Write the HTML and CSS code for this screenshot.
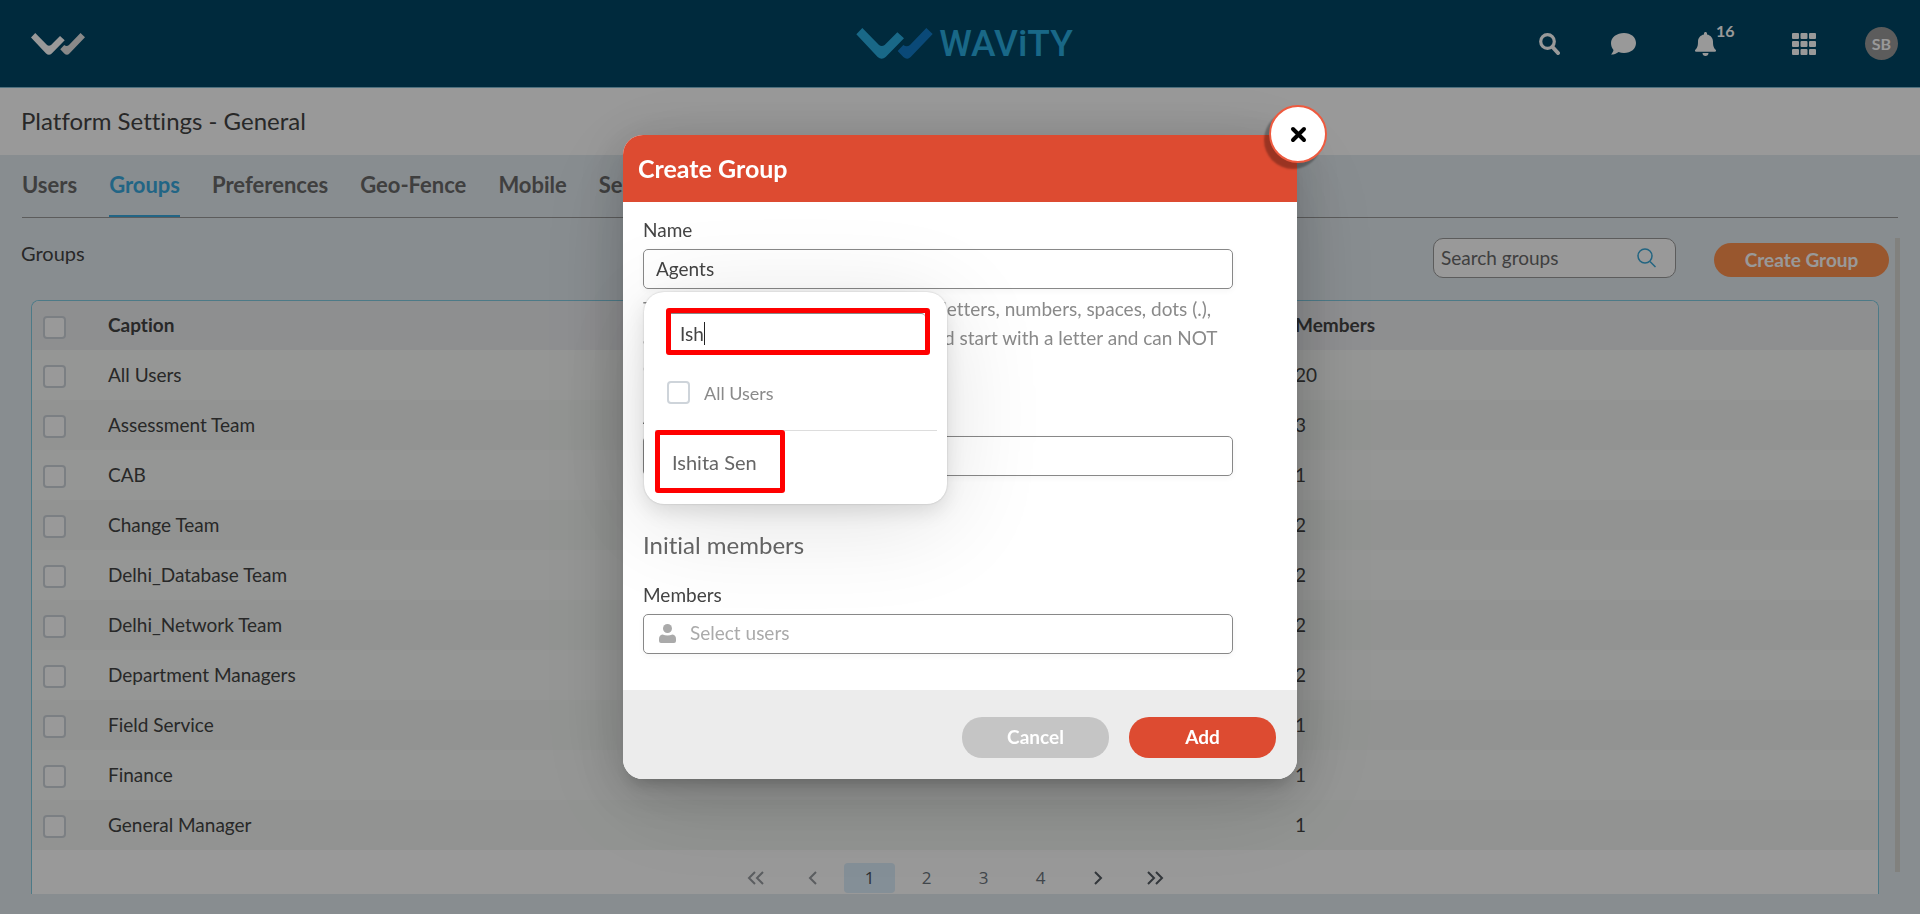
FILE: index.html
```html
<!DOCTYPE html>
<html lang="en">
<head>
    <meta charset="UTF-8">
    <meta name="viewport" content="width=device-width, initial-scale=1.0">
    <title>Platform Settings - General</title>
    <link rel="stylesheet" href="styles.css">
</head>
<body>
    <svg class="defs" aria-hidden="true">
        <symbol id="mark" viewBox="0 0 229 93">
            <path class="mark-left" d="M0 19 18 0 68 51q8 6 17 0L123 13l20 18L88 87q-12 10-24 0Z"/>
            <path class="mark-right" d="M124 69 141 51q10 8 20 0L210 0l19 18L163 87q-10 10-22 0Z"/>
        </symbol>
    </svg>

    <header class="topbar">
        <a href="#" class="home" aria-label="Home"><svg width="54" height="22"><use href="#mark"/></svg></a>
        <div class="brand">
            <svg width="77" height="31"><use href="#mark"/></svg>
            <span>WAViTY</span>
        </div>
        <div class="actions">
            <button type="button" aria-label="Search">
                <svg width="21" height="22" viewBox="0 0 21 22" fill="none" stroke="#fff">
                    <circle cx="8.500" cy="8.500" r="6.800" stroke-width="3.200"/>
                    <path d="M13.500 14 19 20" stroke-width="4" stroke-linecap="round"/>
                </svg>
            </button>
            <button type="button" class="chat" aria-label="Messages">
                <svg width="25" height="22" viewBox="0 0 25 22" fill="#fff">
                    <path d="M13 0C20 0 25 4.300 25 10s-5 10-12 10c-2 0-3.800-.400-5.400-1.100C5.500 20.500 2.800 21.600 0 21.600c1.300-1.400 2.200-2.900 2.500-4.500C1 15.200 0 12.800 0 10 0 4.300 6 0 13 0Z"/>
                </svg>
            </button>
            <button type="button" class="bell" aria-label="Notifications">
                <svg width="21" height="24" viewBox="0 0 21 24" fill="#fff">
                    <path d="M10.500 0c.900 0 1.500.600 1.500 1.500v1c3.600.700 6 3.500 6 7.200 0 4.600 1 6.400 2.700 8 .700.700.200 2-.900 2H1.200c-1.100 0-1.600-1.300-.900-2 1.700-1.600 2.700-3.400 2.700-8C3 6 5.400 3.200 9 2.500v-1C9 .600 9.600 0 10.500 0ZM7.500 21h6c0 1.700-1.300 3-3 3s-3-1.300-3-3Z"/>
                </svg>
                <span class="badge">16</span>
            </button>
            <button type="button" aria-label="Apps">
                <svg width="24" height="22" viewBox="0 0 24 22" fill="#fff">
                    <rect width="7" height="6" rx="1"/><rect x="8.500" width="7" height="6" rx="1"/><rect x="17" width="7" height="6" rx="1"/>
                    <rect y="8" width="7" height="6" rx="1"/><rect x="8.500" y="8" width="7" height="6" rx="1"/><rect x="17" y="8" width="7" height="6" rx="1"/>
                    <rect y="16" width="7" height="6" rx="1"/><rect x="8.500" y="16" width="7" height="6" rx="1"/><rect x="17" y="16" width="7" height="6" rx="1"/>
                </svg>
            </button>
            <button type="button" class="avatar">SB</button>
        </div>
    </header>

    <h1 class="page-title">Platform Settings - General</h1>

    <nav class="tabs">
        <a href="#">Users</a>
        <a href="#" class="active">Groups</a>
        <a href="#">Preferences</a>
        <a href="#">Geo-Fence</a>
        <a href="#">Mobile</a>
        <a href="#">Session</a>
    </nav>

    <main class="content">
        <div class="toolbar">
            <h2>Groups</h2>
            <div class="search">
                <input type="text" placeholder="Search groups" aria-label="Search groups">
                <svg width="19" height="20" viewBox="0 0 19 20" fill="none" stroke="#3aa8d8" stroke-width="1.500">
                    <circle cx="8" cy="8" r="7"/>
                    <path d="M13 13.500 18.500 19"/>
                </svg>
            </div>
            <button type="button" class="create">Create Group</button>
        </div>

        <div class="panel">
            <table>
                <thead>
                    <tr><th class="check"><input type="checkbox" aria-label="Select all"></th><th>Caption</th><th class="count">Members</th></tr>
                </thead>
                <tbody>
                    <tr><td><input type="checkbox" aria-label="All Users"></td><td>All Users</td><td>20</td></tr>
                    <tr><td><input type="checkbox" aria-label="Assessment Team"></td><td>Assessment Team</td><td>3</td></tr>
                    <tr><td><input type="checkbox" aria-label="CAB"></td><td>CAB</td><td>1</td></tr>
                    <tr><td><input type="checkbox" aria-label="Change Team"></td><td>Change Team</td><td>2</td></tr>
                    <tr><td><input type="checkbox" aria-label="Delhi_Database Team"></td><td>Delhi_Database Team</td><td>2</td></tr>
                    <tr><td><input type="checkbox" aria-label="Delhi_Network Team"></td><td>Delhi_Network Team</td><td>2</td></tr>
                    <tr><td><input type="checkbox" aria-label="Department Managers"></td><td>Department Managers</td><td>2</td></tr>
                    <tr><td><input type="checkbox" aria-label="Field Service"></td><td>Field Service</td><td>1</td></tr>
                    <tr><td><input type="checkbox" aria-label="Finance"></td><td>Finance</td><td>1</td></tr>
                    <tr><td><input type="checkbox" aria-label="General Manager"></td><td>General Manager</td><td>1</td></tr>
                </tbody>
            </table>
            <div class="pager">
                <button type="button" class="off" aria-label="First page"><svg width="18" height="14" viewBox="0 0 18 14"><path d="M8 1 2 7l6 6M16 1l-6 6 6 6"/></svg></button>
                <button type="button" class="off" aria-label="Previous page"><svg width="10" height="14" viewBox="0 0 10 14"><path d="M8 1 2 7l6 6"/></svg></button>
                <button type="button" class="current">1</button>
                <button type="button">2</button>
                <button type="button">3</button>
                <button type="button">4</button>
                <button type="button" aria-label="Next page"><svg width="10" height="14" viewBox="0 0 10 14"><path d="m2 1 6 6-6 6"/></svg></button>
                <button type="button" aria-label="Last page"><svg width="18" height="14" viewBox="0 0 18 14"><path d="m2 1 6 6-6 6M10 1l6 6-6 6"/></svg></button>
            </div>
        </div>
        <div class="track"></div>
    </main>

    <div class="overlay">
        <form class="modal" role="dialog" aria-labelledby="modalTitle">
            <button type="button" class="close" aria-label="Close">
                <svg width="17" height="17" viewBox="0 0 17 17" stroke="#000" stroke-width="4" stroke-linecap="round"><path d="m3 3 11 11M14 3 3 14"/></svg>
            </button>
            <h2 class="modal-title" id="modalTitle">Create Group</h2>
            <div class="modal-body">
                <label for="name">Name</label>
                <input type="text" class="field" id="name" value="Agents">
                <p class="hint">This name may contain only English letters, numbers, spaces, dots (.),<br>and hyphens (-), underscore. It should start with a letter and can NOT<br>contain only dots.</p>
                <label for="admins">Administrators</label>
                <input type="text" class="field" id="admins">
                <h3>Initial members</h3>
                <label for="members">Members</label>
                <div class="field members">
                    <svg width="17" height="19" viewBox="0 0 17 19" fill="#aaa">
                        <ellipse cx="8.500" cy="4.500" rx="4.500" ry="4.500"/>
                        <path d="M3.500 10.500q5 2 10 0Q17 11 17 15v2q0 2-2 2H2q-2 0-2-2v-2q0-4 3.500-4.500Z"/>
                    </svg>
                    <input type="text" id="members" placeholder="Select users">
                </div>

                <div class="picker">
                    <div class="picker-search">
                        <input type="text" value="Ish" aria-label="Search users">
                        <span class="caret"></span>
                    </div>
                    <label class="picker-all"><input type="checkbox"> All Users</label>
                    <div class="picker-list">
                        <button type="button">Ishita Sen</button>
                    </div>
                </div>
            </div>
            <div class="modal-footer">
                <button type="button" class="cancel">Cancel</button>
                <button type="submit" class="add">Add</button>
            </div>
        </form>
    </div>
</body>
</html>
```
FILE: styles.css
```css
* {
    box-sizing: border-box;
}
body {
    margin: 0;
    height: 100vh;
    display: flex;
    flex-direction: column;
    overflow: hidden;
    background: #e3ebf0;
    color: #444;
    font-family: Lato, "Liberation Sans", sans-serif;
    font-size: 19px;
    line-height: 24px;
    font-variant-ligatures: none;
}
h1, h2, h3, p {
    margin: 0;
    font-weight: normal;
}
button {
    padding: 0;
    border: none;
    background: none;
    font: inherit;
    cursor: pointer;
}
input {
    font: inherit;
    color: inherit;
}
svg {
    display: block;
}
.defs {
    position: absolute;
    width: 0;
    height: 0;
}
input[type="checkbox"] {
    appearance: none;
    display: block;
    width: 23px;
    height: 23px;
    margin: 0;
    border: 2px solid #ced4da;
    border-radius: 4px;
    background: #fff;
}

/* Top bar */
.topbar {
    display: grid;
    grid-template-columns: 1fr auto 1fr;
    align-items: center;
    height: 88px;
    flex: none;
    padding: 0 22px 0 31px;
    background: #004766;
    border-bottom: 1px solid #84bdd4;
}
.home {
    fill: #fff;
    justify-self: start;
}
.brand {
    display: flex;
    align-items: center;
    gap: 6px;
    color: #2aaee2;
    fill: #2aaee2;
    font-family: Roboto, sans-serif;
    font-size: 37px;
    line-height: 40px;
    font-weight: 500;
}
.brand svg {
    color: #127bc8;
}
.brand svg, .home svg {
    overflow: visible;
}
.mark-right {
    fill: currentColor;
}
.home svg {
    color: #e4e4e4;
}
.actions {
    display: flex;
    align-items: center;
    justify-content: flex-end;
    gap: 49px;
}
.chat {
    margin-left: 2px;
}
.bell {
    position: relative;
    margin: 0 27px 0 10px;
}
.badge {
    position: absolute;
    left: 21px;
    top: -11px;
    color: #fff;
    font-size: 16px;
    font-weight: bold;
    line-height: 20px;
}
.avatar {
    width: 33px;
    height: 33px;
    border-radius: 50%;
    background: #999;
    color: #fff;
    font-size: 16px;
    font-weight: bold;
}

.page-title {
    flex: none;
    padding: 0 21px 2px;
    background: #fff;
    font-size: 24px;
    line-height: 65px;
}

/* Tabs */
.tabs {
    flex: none;
    display: flex;
    gap: 32px;
    margin: 0 22px;
    border-bottom: 1px solid #999;
    font-size: 22px;
    font-weight: bold;
}
.tabs a {
    height: 62px;
    line-height: 60px;
    color: #6a6a6a;
    text-decoration: none;
}
.tabs .active {
    color: #39a9de;
    border-bottom: 2px solid #39a9de;
}

/* Groups list */
.content {
    position: relative;
    flex: 1;
    min-height: 0;
    display: flex;
    flex-direction: column;
    padding-bottom: 20px;
}
.toolbar {
    flex: none;
    display: flex;
    align-items: center;
    padding: 20px 31px 22px 21px;
}
.toolbar h2 {
    flex: 1;
    align-self: flex-start;
    font-size: 20px;
    line-height: 30px;
}
.search {
    display: flex;
    align-items: center;
    width: 243px;
    height: 40px;
    padding: 0 19px 0 7px;
    border: 1px solid #999;
    border-radius: 10px;
    background: #fff;
}
.search input {
    flex: 1;
    min-width: 0;
    padding: 0;
    border: none;
    background: none;
}
.search input::placeholder {
    color: #6a6a6a;
}
.create {
    width: 175px;
    height: 34px;
    margin: 4px 0 0 38px;
    border-radius: 17px;
    background: #ff914e;
    color: #fff;
    font-weight: bold;
}
.panel {
    flex: 1;
    min-height: 0;
    overflow: hidden;
    margin: 0 41px 0 31px;
    border: 1px solid #80cbe2;
    border-bottom: none;
    border-radius: 8px 8px 0 0;
    background: #fff;
}
table {
    width: 100%;
    table-layout: fixed;
    border-collapse: collapse;
}
th, td {
    height: 50px;
    padding: 0 0 1px;
    text-align: left;
}
th {
    height: 49px;
}
th:first-child, td:first-child {
    padding: 3px 0 0 11px;
}
.check {
    width: 76px;
}
.count {
    width: 583px;
}
thead tr {
    background: #edeef1;
}
tbody tr {
    background: #f8faf8;
}
tbody tr:nth-child(even) {
    background: #f3f6f3;
}
.pager {
    display: flex;
    justify-content: center;
    gap: 6px;
    padding-top: 13px;
}
.pager button {
    display: flex;
    align-items: center;
    justify-content: center;
    width: 51px;
    height: 30px;
    border-radius: 4px;
    color: #6c757d;
    font-family: "Open Sans", sans-serif;
    font-size: 17px;
}
.pager .current {
    background: #dceefc;
    color: #495057;
}
.pager svg {
    fill: none;
    stroke: #555c63;
    stroke-width: 2;
}
.pager .off {
    opacity: 0.6;
}
.track {
    position: absolute;
    top: 20px;
    right: 20px;
    bottom: 42px;
    width: 5px;
    background: #d8d8d2;
}

/* Create Group dialog */
.overlay {
    position: fixed;
    inset: 0;
    display: flex;
    align-items: center;
    justify-content: center;
    background: rgba(0, 0, 0, 0.4);
}
.modal {
    position: relative;
    width: 674px;
    border-radius: 20px;
    background: #fff;
    box-shadow: 0 11px 15px -7px rgba(0, 0, 0, 0.2), 0 9px 46px 8px rgba(0, 0, 0, 0.12), 0 24px 100px rgba(0, 0, 0, 0.12);
}
.close {
    position: absolute;
    top: -30px;
    right: -30px;
    display: flex;
    align-items: center;
    justify-content: center;
    width: 58px;
    height: 58px;
    border: 2px solid #ee5a3f;
    border-radius: 50%;
    background: #fff;
    box-shadow: -5px 6px 2px rgba(0, 0, 0, 0.3);
}
.modal-title {
    padding: 0 15px;
    border-radius: 20px 0 0 0;
    background: #dd4b31;
    color: #fff;
    font-size: 25px;
    font-weight: bold;
    line-height: 67px;
}
.modal-body {
    position: relative;
    padding: 16px 64px 36px 20px;
}
.modal-body > label {
    display: block;
}
.field {
    display: block;
    width: 100%;
    height: 40px;
    margin-top: 7px;
    padding: 0 12px 2px;
    border: 1px solid #888;
    border-radius: 5px;
    background: none;
    box-shadow: 0 2px 6px rgba(0, 0, 0, 0.04);
}
.hint {
    margin: 5px 0 24px;
    color: #8a8a8a;
    line-height: 29px;
    white-space: nowrap;
}
.modal-body h3 {
    margin: 54px 0 23px;
    color: #666;
    font-size: 24px;
    line-height: 30px;
}
.members {
    display: flex;
    align-items: center;
    gap: 14px;
    padding: 0 15px 2px;
}
.members input {
    flex: 1;
    padding: 0;
    border: none;
    background: none;
}
.members input::placeholder {
    color: #aaa;
}
.picker {
    position: absolute;
    top: 90px;
    left: 21px;
    width: 303px;
    padding: 16px 10px 11px 11px;
    border-radius: 20px;
    background: #fff;
    box-shadow: 0 0 2px rgba(0, 0, 0, 0.2), 0 8px 20px rgba(0, 0, 0, 0.1), 0 16px 100px rgba(0, 0, 0, 0.12);
}
.picker-search {
    position: relative;
    margin: 0 7px 0 11px;
    border: 5px solid #f00;
    border-radius: 3px;
}
.picker-search input {
    display: block;
    width: 100%;
    height: 37px;
    padding: 2px 9px 0;
    border: none;
    border-top: 1px solid #888;
    border-radius: 0 4px 0 0;
}
.caret {
    position: absolute;
    top: 9px;
    left: 33px;
    width: 1px;
    height: 23px;
    background: #222;
}
.picker-all {
    display: flex;
    align-items: center;
    gap: 14px;
    height: 23px;
    margin: 26px 12px;
    color: #8a8a8a;
    font-size: 18px;
}
.picker-list {
    border-top: 1px solid #ddd;
}
.picker-list button {
    display: block;
    height: 63px;
    width: 130px;
    margin-top: -1px;
    padding-left: 12px;
    border: 5px solid #f00;
    border-radius: 3px;
    color: #666;
    font-size: 20px;
    text-align: left;
}
.modal-footer {
    display: flex;
    justify-content: flex-end;
    gap: 20px;
    padding: 27px 21px 21px;
    border-radius: 0 0 20px 20px;
    background: #ececec;
}
.modal-footer button {
    width: 147px;
    height: 41px;
    padding-bottom: 2px;
    border-radius: 20px;
    color: #fff;
    font-weight: bold;
}
.cancel {
    background: #c5c5c5;
}
.add {
    background: #dd4b31;
}
```
